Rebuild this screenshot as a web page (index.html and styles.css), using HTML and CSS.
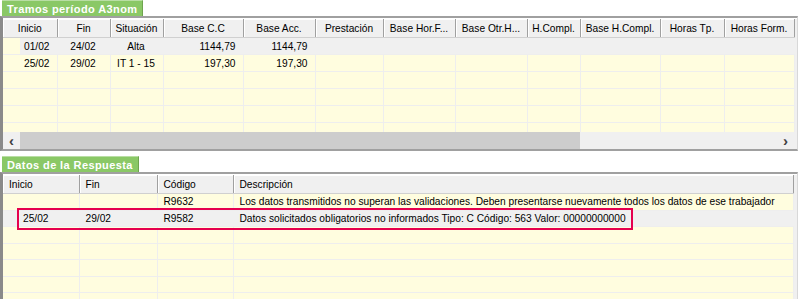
FILE: index.html
```html
<!DOCTYPE html>
<html lang="es">
<head>
    <meta charset="UTF-8">
    <title>Tramos período A3nom</title>
    <link rel="stylesheet" href="styles.css">
</head>
<body>
    <div class="panel panel-tramos">
        <div class="tab">Tramos período A3nom</div>
        <div class="frame">
            <div class="grid-area">
                <table class="grid grid-tramos">
                    <colgroup>
                        <col style="width:54px"><col style="width:53px"><col style="width:53px">
                        <col style="width:80px"><col style="width:72px"><col style="width:68px">
                        <col style="width:72px"><col style="width:72px"><col style="width:53px">
                        <col style="width:80px"><col style="width:64px"><col style="width:70px">
                    </colgroup>
                    <thead>
                        <tr>
                            <th>Inicio</th><th>Fin</th><th>Situación</th><th>Base C.C</th>
                            <th>Base Acc.</th><th>Prestación</th><th>Base Hor.F...</th><th>Base Otr.H...</th>
                            <th>H.Compl.</th><th>Base H.Compl.</th><th>Horas Tp.</th><th>Horas Form.</th>
                        </tr>
                    </thead>
                    <tbody>
                        <tr class="selected">
                            <td class="num first">01/02</td><td class="mid">24/02</td><td class="mid">Alta</td>
                            <td class="num">1144,79</td><td class="num">1144,79</td>
                            <td></td><td></td><td></td><td></td><td></td><td></td><td></td>
                        </tr>
                        <tr>
                            <td class="num">25/02</td><td class="mid">29/02</td><td class="mid">IT 1 - 15</td>
                            <td class="num">197,30</td><td class="num">197,30</td>
                            <td></td><td></td><td></td><td></td><td></td><td></td><td></td>
                        </tr>
                        <tr class="empty"><td></td><td></td><td></td><td></td><td></td><td></td><td></td><td></td><td></td><td></td><td></td><td></td></tr>
                        <tr class="empty"><td></td><td></td><td></td><td></td><td></td><td></td><td></td><td></td><td></td><td></td><td></td><td></td></tr>
                        <tr class="empty"><td></td><td></td><td></td><td></td><td></td><td></td><td></td><td></td><td></td><td></td><td></td><td></td></tr>
                        <tr class="empty"><td></td><td></td><td></td><td></td><td></td><td></td><td></td><td></td><td></td><td></td><td></td><td></td></tr>
                    </tbody>
                </table>
            </div>
            <div class="hscroll">
                <span class="arrow">&lsaquo;</span>
                <div class="track"><div class="thumb"></div></div>
                <span class="arrow">&rsaquo;</span>
            </div>
        </div>
    </div>

    <div class="panel panel-respuesta">
        <div class="tab">Datos de la Respuesta</div>
        <div class="frame">
            <table class="grid grid-respuesta">
                <colgroup>
                    <col style="width:76px"><col style="width:78px"><col style="width:76px"><col>
                </colgroup>
                <thead>
                    <tr><th>Inicio</th><th>Fin</th><th>Código</th><th>Descripción</th></tr>
                </thead>
                <tbody>
                    <tr>
                        <td></td><td></td><td>R9632</td>
                        <td>Los datos transmitidos no superan las validaciones. Deben presentarse nuevamente todos los datos de ese trabajador</td>
                    </tr>
                    <tr class="selected">
                        <td class="start">25/02</td><td>29/02</td><td>R9582</td>
                        <td>Datos solicitados obligatorios no informados Tipo: C Código: 563 Valor: 00000000000</td>
                    </tr>
                    <tr class="empty"><td></td><td></td><td></td><td></td></tr>
                    <tr class="empty"><td></td><td></td><td></td><td></td></tr>
                    <tr class="empty"><td></td><td></td><td></td><td></td></tr>
                    <tr class="empty"><td></td><td></td><td></td><td></td></tr>
                    <tr class="empty"><td></td><td></td><td></td><td></td></tr>
                </tbody>
            </table>
            <div class="highlight"></div>
        </div>
    </div>
</body>
</html>
```

FILE: styles.css
```css
html {
    overflow: hidden;
}

body {
    margin: 0;
    background: #ffffff;
    font-family: "Liberation Sans", Arial, sans-serif;
    font-size: 10.2px;
    color: #000000;
    width: 798px;
    height: 300px;
    overflow: hidden;
}

.panel {
    display: flex;
    flex-direction: column;
}

.panel-respuesta {
    margin-top: 5px;
}

.tab {
    align-self: flex-start;
    margin-left: 2px;
    height: 16px;
    line-height: 16px;
    padding: 0 5px 0 5px;
    background: #8ac866;
    border-top: 1px solid #b9dea4;
    border-right: 1px solid #6fa44f;
    color: #ffffff;
    font-family: "Liberation Sans", Arial, sans-serif;
    font-weight: bold;
    font-size: 11px;
    letter-spacing: 0.4px;
    box-sizing: border-box;
}

.frame {
    position: relative;
    background: #f0f0f0;
    border-top: 2px solid #a0a0a0;
    border-left: 3px solid #8a8a8a;
    border-right: 1px solid #d8d8d8;
    box-shadow: inset 0 1px 0 #ffffff;
    padding-top: 1px;
}

.panel-tramos .frame {
    display: flex;
    flex-direction: column;
    border-bottom: 2px solid #a0a0a0;
}

.panel-tramos .grid-area {
    height: 113px;
    overflow: hidden;
}

.panel-respuesta .frame {
    height: 124px;
    overflow: hidden;
}

.grid {
    border-collapse: collapse;
    table-layout: fixed;
    width: 791px;
}

.grid th {
    height: 18px;
    padding: 0 3px;
    font-weight: normal;
    background: #f0f0f0;
    border-right: 1px solid #a0a0a0;
    border-bottom: 1px solid #d0d0d0;
    box-shadow: inset 1px 1px 0 #ffffff;
    white-space: nowrap;
    overflow: hidden;
    text-align: center;
}

.grid-respuesta th {
    text-align: left;
    padding-left: 6px;
}

.grid td {
    height: 16px;
    padding: 0 7px 0 6px;
    background: #fffddf;
    border-right: 1px solid #eeeeee;
    border-bottom: 1px solid #eeeeee;
    white-space: nowrap;
    overflow: hidden;
}

.grid-respuesta td {
    height: 15.5px;
    padding-left: 6px;
}

.grid tr.selected td {
    background: #f0f0f0;
    border-right-color: #f0f0f0;
}

.grid-tramos tr.selected td.first {
    background: linear-gradient(to right, #fffddf 17px, #f0f0f0 17px);
}

.grid td.num {
    text-align: right;
}

.grid td.mid {
    text-align: center;
}

.grid td.start {
    padding-left: 20px;
}

.hscroll {
    display: flex;
    align-items: center;
    height: 17px;
    width: 791px;
    background: #f0f0f0;
}

.hscroll .arrow {
    width: 17px;
    text-align: center;
    font-size: 15px;
    font-weight: bold;
    line-height: 17px;
    color: #404040;
}

.hscroll .track {
    flex: 1;
    height: 17px;
}

.hscroll .thumb {
    width: 560px;
    height: 17px;
    background: #cdcdcd;
}

.highlight {
    position: absolute;
    left: 14px;
    top: 34px;
    width: 612px;
    height: 18px;
    border: 2px solid #e5004f;
}
```
